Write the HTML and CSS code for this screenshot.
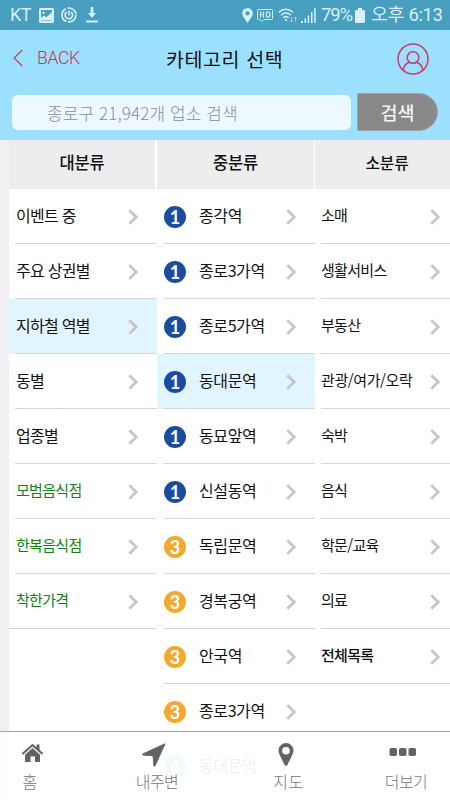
FILE: index.html
```html
<!DOCTYPE html>
<html lang="ko">
<head>
<meta charset="utf-8">
<title>카테고리 선택</title>
<link rel="stylesheet" href="styles.css">
</head>
<body>
<svg class="defs" width="0" height="0">
  <symbol id="chev" viewBox="0 0 10 16"><path d="M1.3 1.3 8.2 8 1.3 14.7" fill="none" stroke="#c6c6c8" stroke-width="2.7"/></symbol>
</svg>
<div class="app">
  <div class="status">
    <span class="carrier">KT</span>
    <svg class="s-img" width="15" height="15" viewBox="0 0 15 15"><path fill="currentColor" fill-rule="evenodd" d="M1.500 0h12A1.500 1.500 0 0 1 15 1.500v12a1.500 1.500 0 0 1-1.500 1.500h-12A1.500 1.500 0 0 1 0 13.500v-12A1.500 1.500 0 0 1 1.500 0zM2 2v8l3-2.500 2.500 1.800L13 4V2zM2 12.500h11V11L8 11 5 9.500z"/><circle cx="4.500" cy="4.800" r="1.200" fill="currentColor"/><path d="M2 11 5 8l2.500 2L13 5.500V12H2z" fill="currentColor"/></svg>
    <svg class="s-sync" width="16" height="16" viewBox="0 0 16 16" fill="none" stroke="currentColor"><circle cx="8" cy="8" r="7" stroke-width="1.700" stroke-dasharray="12 1.500 16 1.500"/><path d="M5.700 5A3.700 3.700 0 1 0 10 5" stroke-width="1.800"/><path d="M8 3.500v5" stroke-width="1.600"/></svg>
    <svg class="s-down" width="12" height="16" viewBox="0 0 12 16"><path fill="currentColor" d="M4.700 0h2.600v6H10l-4 5-4-5h2.700zM0 13.500h12v2H0z"/></svg>
    <span class="grow"></span>
    <svg class="s-pin" width="11" height="15" viewBox="0 0 10 14"><path fill="currentColor" fill-rule="evenodd" d="M5 0a5 5 0 0 1 5 5c0 3-3 6-5 9-2-3-5-6-5-9a5 5 0 0 1 5-5zm0 3a2 2 0 1 0 0 4 2 2 0 0 0 0-4z"/></svg>
    <svg class="s-hd" width="16" height="13" viewBox="0 0 16 13" fill="none" stroke="currentColor"><path d="M1.500.500h13a1 1 0 0 1 1 1v8a1 1 0 0 1-1 1H7l-2 2-2-2H1.500a1 1 0 0 1-1-1v-8a1 1 0 0 1 1-1z"/><path d="M3.500 2.500v6M3.500 5.500h3M6.500 2.500v6M9.500 3h1.500q2 0 2 2.500T11 8H9.500z" stroke-width="1.200"/></svg>
    <svg class="s-wifi" width="20" height="15" viewBox="0 0 20 15" fill="none" stroke="currentColor" stroke-width="1.500"><path d="M.700 4.500q7-6.500 14.600 0M3 7.300q5-4.500 10 0M5.300 9.800q2.700-2.300 5.400 0"/><circle cx="8" cy="12" r="1.100" fill="currentColor" stroke="none"/><path d="M13.500 9v5m-1.500-1.500 1.500 1.500 1.300-1.500M17.500 14V9m-1.500 1.500L17.500 9l1.500 1.500" stroke-width=".8" opacity=".7"/></svg>
    <svg class="s-sig" width="15" height="15" viewBox="0 0 15 15" fill="currentColor"><path d="M0 13h2v2H0zM3.500 10.500h1.500V15H3.500zM6.700 7.500h1.500V15H6.700zM10 4h1.500v11H10zM13.200 0h1.500v15h-1.500z"/></svg>
    <span class="pct">79%</span>
    <svg class="s-bat" width="10" height="15" viewBox="0 0 10 15"><path fill="currentColor" d="M3 0h4v2h2q1 0 1 1v11q0 1-1 1H1q-1 0-1-1V3q0-1 1-1h2z"/></svg>
    <span class="time">오후 6:13</span>
  </div>
  <header class="head">
    <div class="title-row">
      <div class="back"><svg width="10" height="18" viewBox="0 0 10 18"><path d="M9.300 1 1 9l8.300 8" fill="none" stroke="#c83a55" stroke-width="1.100"/></svg><span>BACK</span></div>
      <h1>카테고리 선택</h1>
      <svg class="user" width="32" height="32" viewBox="0 0 32 32" fill="none" stroke="#cf3c68" stroke-width="1.500"><circle cx="16" cy="16" r="15"/><circle cx="16" cy="14.500" r="5.800"/><path d="M6.300 27.200q.7-6.500 6-7.800M25.700 27.200q-.7-6.500-6-7.800"/></svg>
    </div>
    <div class="search-row">
      <div class="field">종로구 21,942개 업소 검색</div>
      <div class="btn">검색</div>
    </div>
  </header>
  <main class="cols">
    <section class="col c1">
      <h2>대분류</h2>
      <div class="row"><span>이벤트 중</span><svg><use href="#chev"/></svg></div>
      <div class="row"><span>주요 상권별</span><svg><use href="#chev"/></svg></div>
      <div class="row on"><span>지하철 역별</span><svg><use href="#chev"/></svg></div>
      <div class="row"><span>동별</span><svg><use href="#chev"/></svg></div>
      <div class="row"><span>업종별</span><svg><use href="#chev"/></svg></div>
      <div class="row green"><span>모범음식점</span><svg><use href="#chev"/></svg></div>
      <div class="row green"><span>한복음식점</span><svg><use href="#chev"/></svg></div>
      <div class="row green last"><span>착한가격</span><svg><use href="#chev"/></svg></div>
    </section>
    <section class="col c2">
      <h2>중분류</h2>
      <div class="row"><i class="b1">1</i><span>종각역</span><svg><use href="#chev"/></svg></div>
      <div class="row"><i class="b1">1</i><span>종로3가역</span><svg><use href="#chev"/></svg></div>
      <div class="row"><i class="b1">1</i><span>종로5가역</span><svg><use href="#chev"/></svg></div>
      <div class="row on"><i class="b1">1</i><span>동대문역</span><svg><use href="#chev"/></svg></div>
      <div class="row"><i class="b1">1</i><span>동묘앞역</span><svg><use href="#chev"/></svg></div>
      <div class="row"><i class="b1">1</i><span>신설동역</span><svg><use href="#chev"/></svg></div>
      <div class="row"><i class="b3">3</i><span>독립문역</span><svg><use href="#chev"/></svg></div>
      <div class="row"><i class="b3">3</i><span>경복궁역</span><svg><use href="#chev"/></svg></div>
      <div class="row"><i class="b3">3</i><span>안국역</span><svg><use href="#chev"/></svg></div>
      <div class="row"><i class="b3">3</i><span>종로3가역</span><svg><use href="#chev"/></svg></div>
      <div class="row"><i class="b4">4</i><span>동대문역</span></div>
    </section>
    <section class="col c3">
      <h2>소분류</h2>
      <div class="row"><span>소매</span><svg><use href="#chev"/></svg></div>
      <div class="row"><span>생활서비스</span><svg><use href="#chev"/></svg></div>
      <div class="row"><span>부동산</span><svg><use href="#chev"/></svg></div>
      <div class="row"><span class="tight">관광/여가/오락</span><svg><use href="#chev"/></svg></div>
      <div class="row"><span>숙박</span><svg><use href="#chev"/></svg></div>
      <div class="row"><span>음식</span><svg><use href="#chev"/></svg></div>
      <div class="row"><span>학문/교육</span><svg><use href="#chev"/></svg></div>
      <div class="row"><span>의료</span><svg><use href="#chev"/></svg></div>
      <div class="row all last"><span>전체목록</span><svg><use href="#chev"/></svg></div>
    </section>
  </main>
  <nav class="tabs">
    <div class="tab t1"><svg width="23" height="20" viewBox="0 0 23 20" fill="#636363"><path d="M11.500 5 19 11.700V19h-5v-5.500H9.500V19H4v-7.300z"/><path d="M11.500.800 15.500 4.200V1.500h3v5.300l3.800 3.400-1.300 1.500-9.500-8.200L2 11.700.700 10.200z"/></svg><span>홈</span></div>
    <div class="tab t2"><svg width="24" height="24" viewBox="0 0 24 24"><path fill="#636363" d="M23 .800 13 23h-1L11 12.700.800 12V11z" stroke="#636363" stroke-linejoin="round"/></svg><span>내주변</span></div>
    <div class="tab t3"><svg width="16" height="23" viewBox="0 0 16 23"><path fill="#636363" fill-rule="evenodd" d="M8 0a7.500 7.500 0 0 1 7.500 7.500c0 3.500-3 7.500-6 14.500q-1.500 1.600-3 0C3.500 15 .500 11 .500 7.500A7.500 7.500 0 0 1 8 0zm0 4a3.800 3.800 0 1 0 0 7.600A3.800 3.800 0 0 0 8 4z"/></svg><span>지도</span></div>
    <div class="tab t4"><svg width="28" height="8" viewBox="0 0 28 8" fill="#636363"><rect x=".5" width="7.500" height="8" rx="1.800"/><rect x="10" width="7.500" height="8" rx="1.800"/><rect x="19.500" width="7.500" height="8" rx="1.800"/></svg><span>더보기</span></div>
  </nav>
</div>
</body>
</html>
```
FILE: styles.css
```css
* { box-sizing: border-box; }
body { margin: 0; font-family: "Noto Sans CJK KR", sans-serif; font-weight: 400; color: #111; }
.defs { position: absolute; }
.app { width: 450px; height: 800px; overflow: hidden; display: flex; flex-direction: column; position: relative; background: #fff; }

.status { height: 30px; flex: none; background: #479ebf; color: #d5f0f7; display: flex; align-items: center; padding: 0 10px; font-family: Roboto, "Noto Sans CJK KR", sans-serif; line-height: 30px; white-space: nowrap; }
.status svg { flex: none; }
.carrier { font-size: 18px; width: 29px; letter-spacing: -.5px; }
.s-sync { margin-left: 7px; }
.s-down { margin-left: 9px; }
.grow { flex: 1; }
.s-hd { margin-left: 4px; }
.s-wifi { margin-left: 5px; }
.s-sig { margin-left: 3px; }
.pct { font-size: 18.500px; width: 32px; margin-left: 5px; letter-spacing: -1.200px; }
.s-bat { margin-left: 2px; }
.time { font-size: 18.500px; width: 69px; margin-left: 6px; letter-spacing: -.4px; }

.head { height: 110px; flex: none; background: #9be0fe; }
.title-row { height: 57px; display: flex; align-items: center; justify-content: space-between; padding: 0 21px 0 13px; }
.back { display: flex; align-items: center; gap: 14px; color: #c9364c; font: 300 17.500px/20px Roboto, sans-serif; width: 153px; letter-spacing: -.3px; position: relative; top: -1px; }
h1 { margin: 0; flex: 1; font-size: 19.500px; line-height: 24px; font-weight: 400; color: #111; letter-spacing: .6px; }
.search-row { display: flex; align-items: center; padding: 6px 12px; }
.field { width: 339px; height: 35px; border-radius: 6px; background: #eef9fe; color: #878e93; font-size: 17px; line-height: 35px; padding-left: 35px; letter-spacing: .1px; font-weight: 300; white-space: nowrap; }
.btn { width: 81px; height: 38px; margin-left: 6px; background: #888; border: 1px solid #a2a6a8; border-radius: 0 19px 19px 0; color: #f4f4f4; font-size: 18.500px; line-height: 36px; text-align: center; font-weight: 500; }

.cols { flex: 1; min-height: 0; display: grid; grid-template-columns: 148px 158px 135px; padding-left: 9px; background: linear-gradient(90deg, #efeff4 9px, #fff 9px); }
h2 { margin: 0; height: 49px; background: #ededed; font-size: 16.500px; line-height: 45px; font-weight: 500; text-align: center; color: #111; letter-spacing: -.2px; }
.c1 h2 { border-right: 2px solid #fff; }
.c2 h2 { border-right: 1px solid #fff; }
.c3 h2 { padding-left: 9px; font-size: 15.800px; }
.row { height: 55px; display: flex; align-items: center; padding: 0 19px 0 7px; font-size: 16px; letter-spacing: -.7px; white-space: nowrap; background: linear-gradient(#d5d5d7, #d5d5d7) right bottom / calc(100% - 6px) 1px no-repeat; }
.row.on { background-color: #e1f5fe; }
.row.last { background-size: 100% 1px; }
.row span { flex: 1; line-height: 22px; margin-top: -4px; }
.row svg { width: 10px; height: 16px; flex: none; }
.green { color: #108210; font-size: 15px; }
.c2 .row { font-size: 16px; letter-spacing: -.4px; padding-right: 19px; }
.c3 .row { font-size: 15px; padding-right: 10px; padding-left: 6px; }
.c3 .tight { letter-spacing: -.4px; }
.all { font-weight: 500; }
.row i { width: 22px; height: 22px; border-radius: 50%; color: #fff; font: 700 18px/22px Lato, sans-serif; text-align: center; margin: 0 13px 0 0; letter-spacing: 0; }
.b1 { background: #1b4c9f; }
.b3 { background: #f2a92e; }
.b4 { background: #32a1e0; }

.tabs { position: absolute; left: 0; right: 0; bottom: 0; height: 69px; border-top: 1px solid #a5a5a5; background: rgba(255, 255, 255, .94); display: grid; grid-template-columns: 59px 196px 67px 128px; color: #747474; font-size: 16px; font-weight: 300; }
.tab { display: flex; flex-direction: column; align-items: center; white-space: nowrap; padding-top: 11px; }
.tab span { line-height: 20px; margin-top: auto; margin-bottom: 9px; letter-spacing: -.5px; }
.t1 svg { margin-left: 5px; }
.t2 svg { margin-right: 6px; }
.t3 svg { margin-right: 6px; }
.t3 span { letter-spacing: .6px; }
.t4 { padding: 16px 0 0 40px; }
.t4 svg { margin-right: 7px; }
```
